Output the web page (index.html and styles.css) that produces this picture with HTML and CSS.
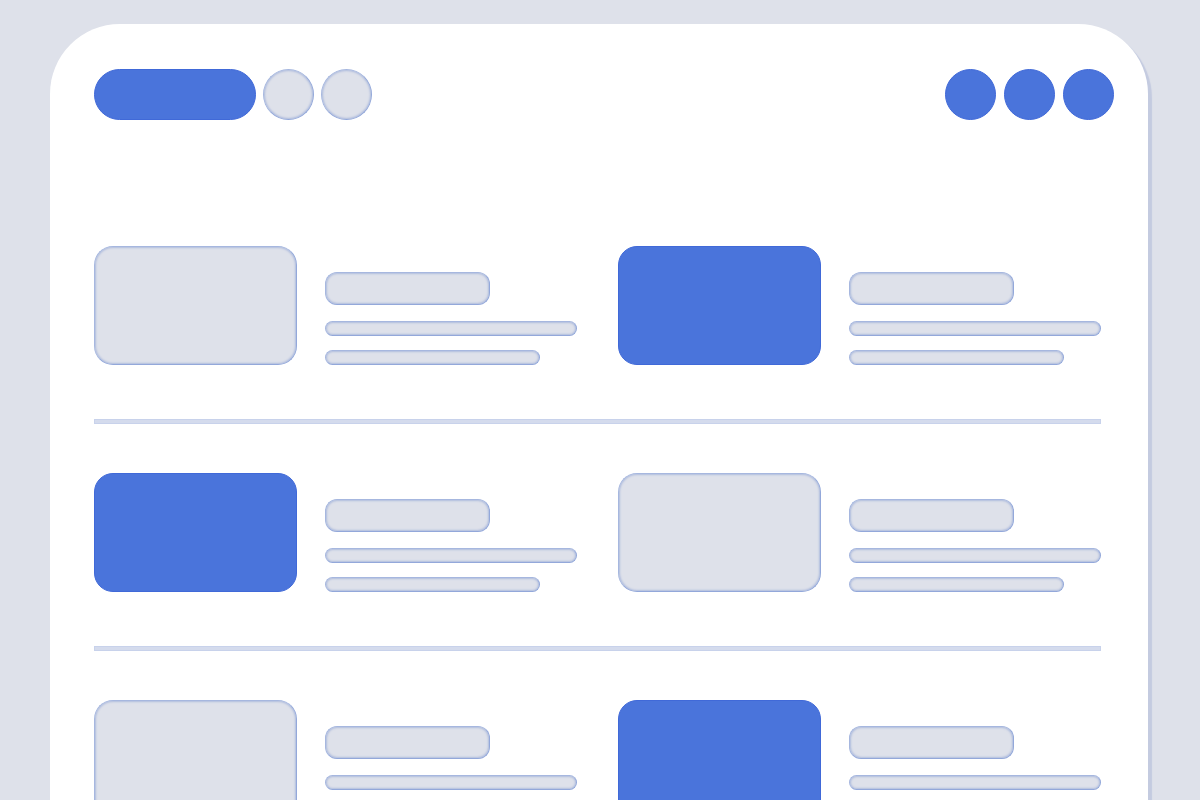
FILE: index.html
```html
<!DOCTYPE html>
<html lang="en">
<head>
  <meta charset="UTF-8" />
  <meta name="viewport" content="width=device-width, initial-scale=1" />
  <title>Wireframe</title>
  <link rel="stylesheet" href="styles.css">
</head>
<body>
  <div class="panel">
    <header>
      <div class="group">
        <span class="shape pill blue"></span>
        <span class="shape dot"></span>
        <span class="shape dot"></span>
      </div>
      <div class="group right">
        <span class="shape dot blue"></span>
        <span class="shape dot blue"></span>
        <span class="shape dot blue"></span>
      </div>
    </header>

    <main>
      <section class="row">
        <article class="card">
          <div class="shape thumb"></div>
          <div class="lines">
            <div class="shape title"></div>
            <div class="shape line"></div>
            <div class="shape line short"></div>
          </div>
        </article>
        <article class="card">
          <div class="shape thumb blue"></div>
          <div class="lines">
            <div class="shape title"></div>
            <div class="shape line"></div>
            <div class="shape line short"></div>
          </div>
        </article>
      </section>
      <hr>
      <section class="row">
        <article class="card">
          <div class="shape thumb blue"></div>
          <div class="lines">
            <div class="shape title"></div>
            <div class="shape line"></div>
            <div class="shape line short"></div>
          </div>
        </article>
        <article class="card">
          <div class="shape thumb"></div>
          <div class="lines">
            <div class="shape title"></div>
            <div class="shape line"></div>
            <div class="shape line short"></div>
          </div>
        </article>
      </section>
      <hr>
      <section class="row">
        <article class="card">
          <div class="shape thumb"></div>
          <div class="lines">
            <div class="shape title"></div>
            <div class="shape line"></div>
            <div class="shape line short"></div>
          </div>
        </article>
        <article class="card">
          <div class="shape thumb blue"></div>
          <div class="lines">
            <div class="shape title"></div>
            <div class="shape line"></div>
            <div class="shape line short"></div>
          </div>
        </article>
      </section>
    </main>
  </div>
</body>
</html>
```

FILE: styles.css
```css
* {
  margin: 0;
  padding: 0;
  box-sizing: border-box;
}
body {
  padding: 24px 52px 0 50px;
  background-color: #dee1ea;
  font-family: "Liberation Sans", Arial, sans-serif;
}
.panel {
  min-height: 100vh;
  background-color: #fff;
  border-radius: 70px 70px 0 0;
  box-shadow: 4px 4px 1px #c4cbe0;
}
header {
  display: flex;
  justify-content: space-between;
  padding: 45px 34px 0 44px;
}
.group {
  display: flex;
  gap: 7px;
}
.group.right {
  gap: 8px;
}

/* Base for every placeholder */
.shape {
  background-color: #dee1ea;
  border: 1px solid #a6b7df;
  border-right-color: #93a8da;
  border-bottom-color: #93a8da;
  box-shadow: inset 0 0 2px 1px #b0bddd;
}
.blue {
  background-color: #4a74db;
  border-color: #4069d8;
  box-shadow: none;
}
.dot {
  width: 51px;
  height: 51px;
  border-radius: 50%;
}
.pill {
  width: 162px;
  height: 51px;
  border-radius: 26px;
}

/* Content rows */
main {
  padding: 126px 47px 54px 44px;
}
.row {
  display: grid;
  grid-template-columns: 1fr 1fr;
  gap: 41px;
}
.card {
  display: flex;
  gap: 28px;
}
.thumb {
  flex-shrink: 0;
  width: 203px;
  height: 119px;
  border-radius: 19px;
}
.lines {
  flex: 1;
  display: flex;
  flex-direction: column;
  justify-content: flex-end;
}
.title {
  width: 165px;
  height: 33px;
  margin-bottom: 16px;
  border-radius: 12px;
}
.line {
  height: 15px;
  border-radius: 8px;
}
.short {
  width: 215px;
  margin-top: 14px;
}
hr {
  height: 5px;
  margin: 54px 0 49px;
  background-color: #d4dbed;
  border: 1px solid #c8d2eb;
}
```
